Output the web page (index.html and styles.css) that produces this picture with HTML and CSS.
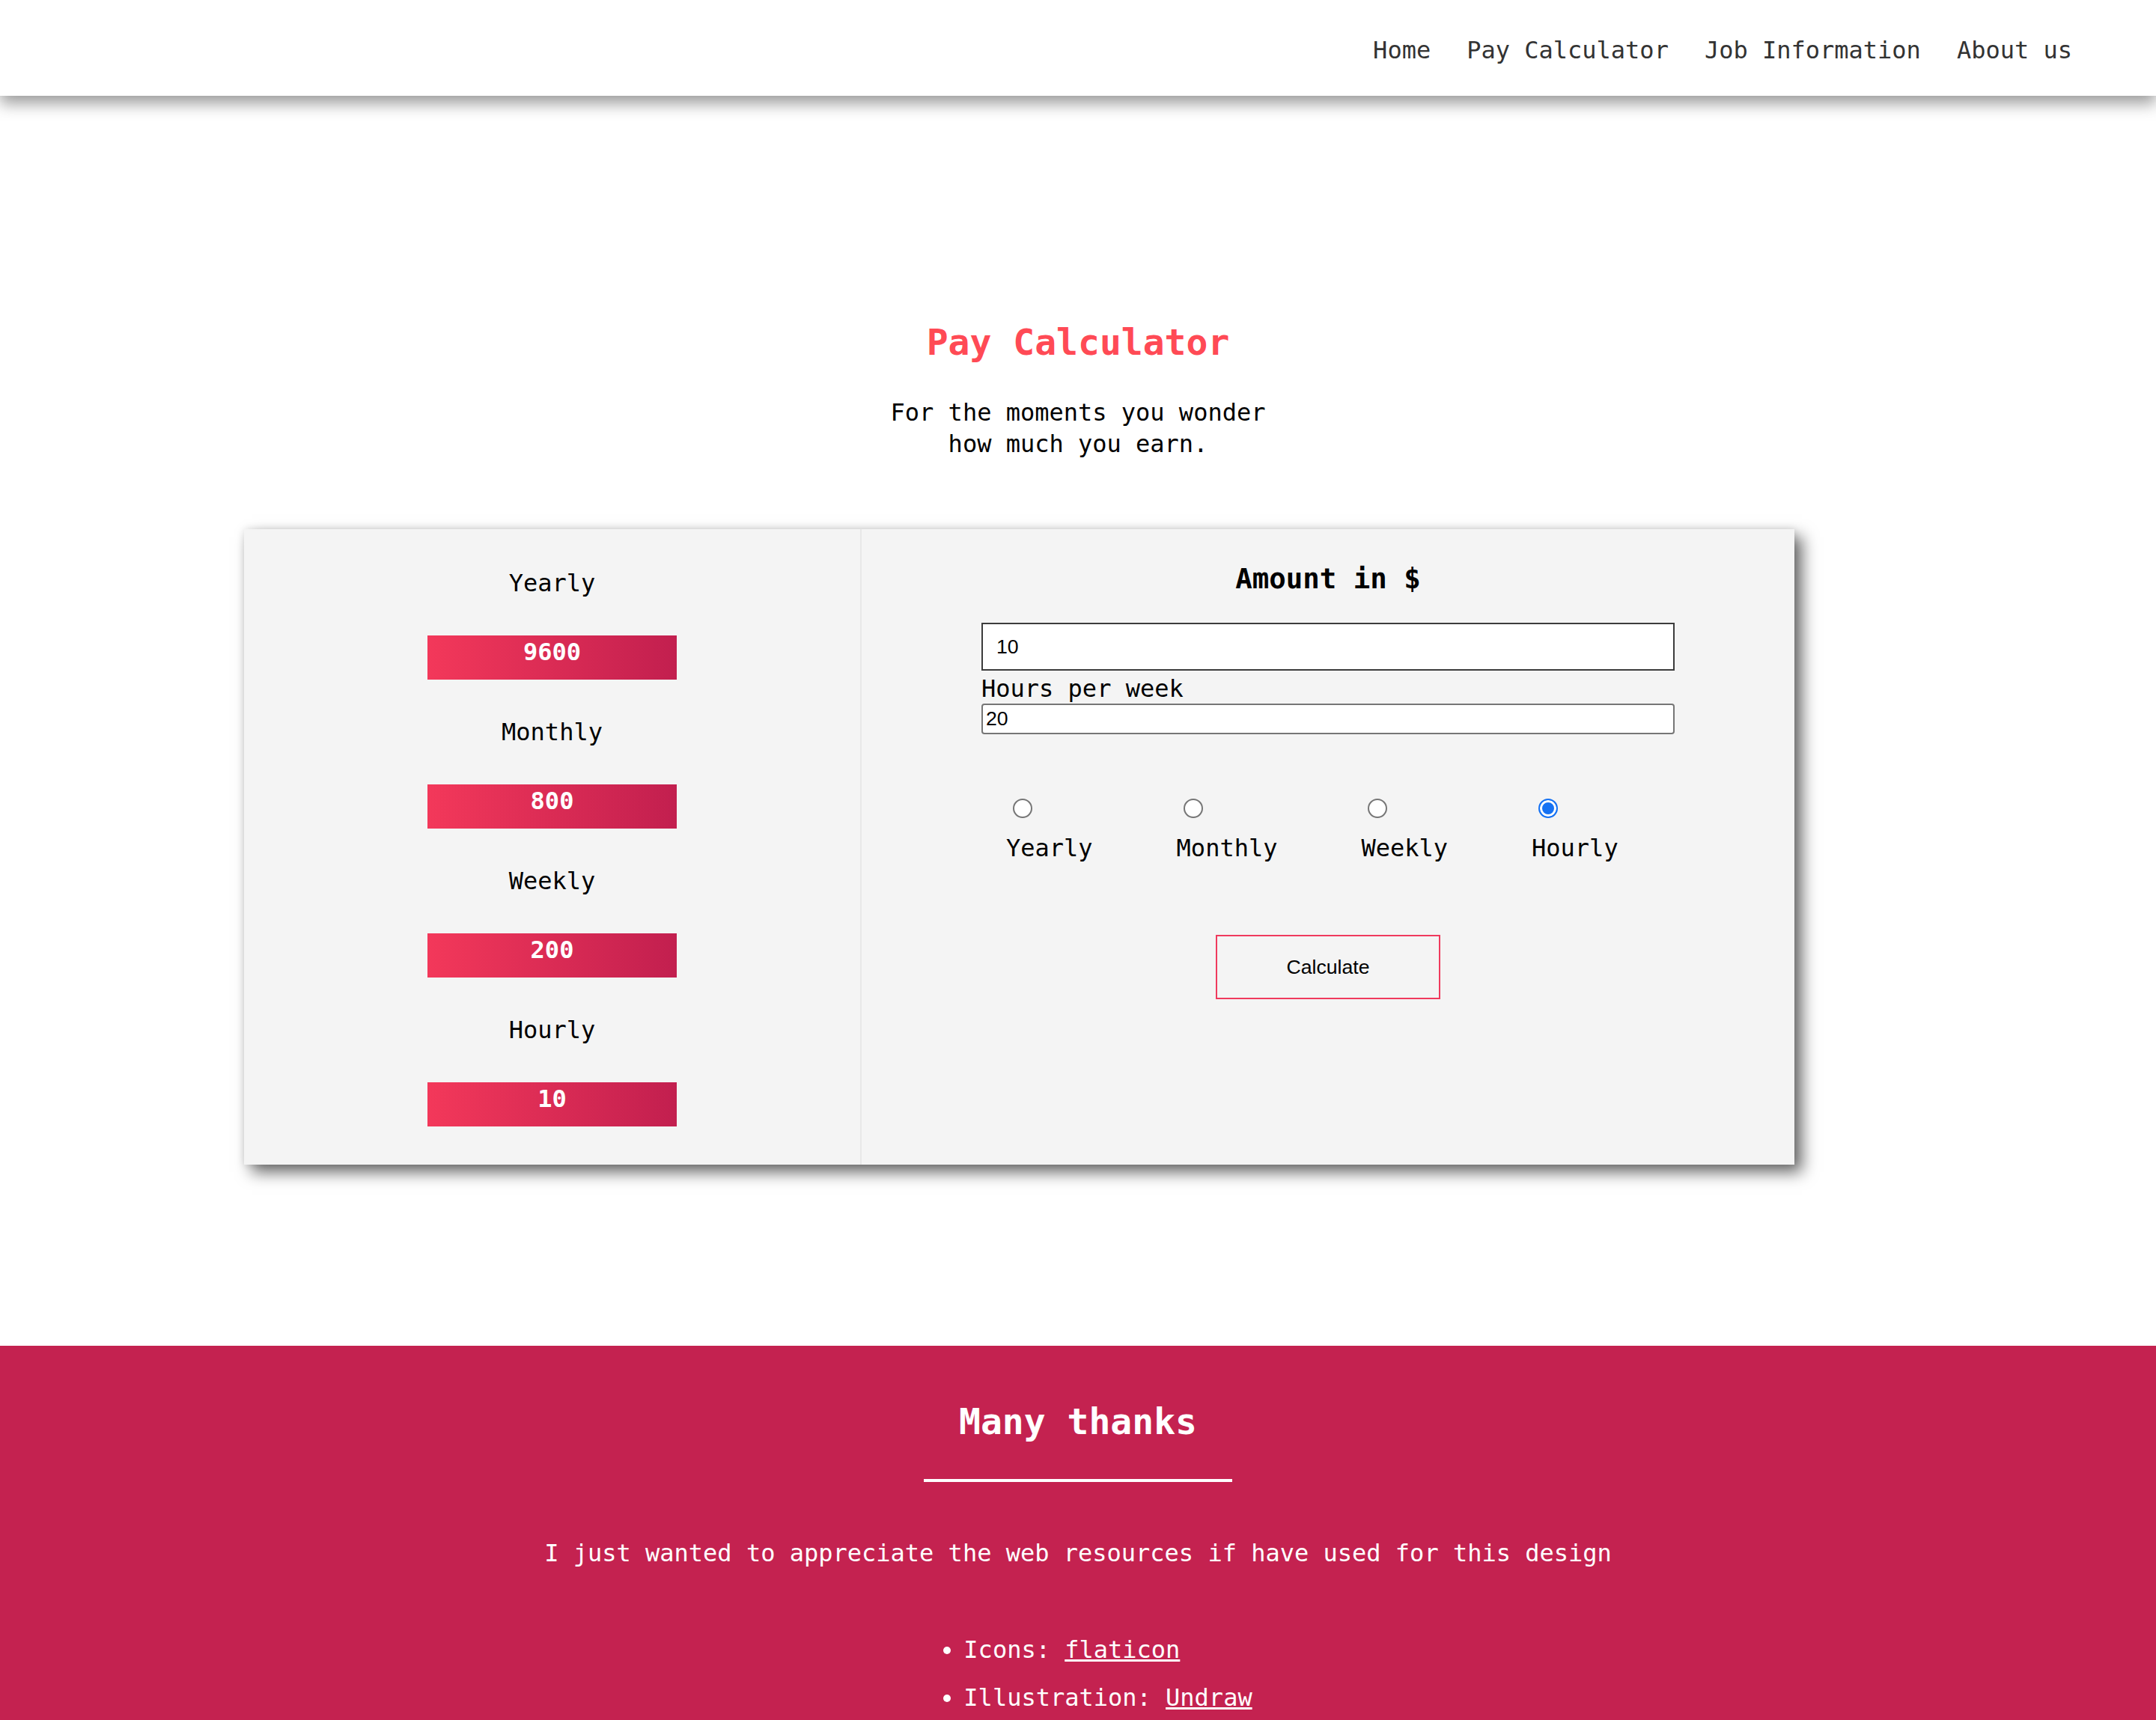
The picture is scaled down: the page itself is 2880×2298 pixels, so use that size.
FILE: index.html
```html
<!DOCTYPE html>
<html lang="en">
<head>
<meta charset="utf-8">
<title>Pay Calculator</title>
<link rel="stylesheet" href="styles.css">
</head>
<body>
<header class="navbar">
  <nav class="nav-links">
    <a href="#">Home</a>
    <a href="#">Pay Calculator</a>
    <a href="#">Job Information</a>
    <a href="#">About us</a>
  </nav>
</header>
<main class="main">
  <h1 class="title">Pay Calculator</h1>
  <p class="subtitle">For the moments you wonder<br>how much you earn.</p>
  <section class="card">
    <div class="results">
      <div class="result-label">Yearly</div>
      <div class="result-value">9600</div>
      <div class="result-label">Monthly</div>
      <div class="result-value">800</div>
      <div class="result-label">Weekly</div>
      <div class="result-value">200</div>
      <div class="result-label">Hourly</div>
      <div class="result-value">10</div>
    </div>
    <div class="form">
      <h3 class="form-title">Amount in $</h3>
      <div class="fields">
        <input class="amount" type="text" value="10">
        <label class="hours-label">Hours per week</label>
        <input class="hours" type="text" value="20">
      </div>
      <div class="periods">
        <label class="period"><input type="radio" name="period"><span>Yearly</span></label>
        <label class="period"><input type="radio" name="period"><span>Monthly</span></label>
        <label class="period"><input type="radio" name="period"><span>Weekly</span></label>
        <label class="period"><input type="radio" name="period" checked><span>Hourly</span></label>
      </div>
      <button class="calc" type="button">Calculate</button>
    </div>
  </section>
</main>
<footer class="footer">
  <h2 class="footer-title">Many thanks</h2>
  <div class="bar"></div>
  <p class="footer-text">I just wanted to appreciate the web resources if have used for this design</p>
  <ul class="credits">
    <li>Icons: <a href="#">flaticon</a></li>
    <li>Illustration: <a href="#">Undraw</a></li>
  </ul>
</footer>
</body>
</html>
```

FILE: styles.css
```css
* { box-sizing: border-box; }
html, body { margin: 0; padding: 0; }
body {
  font-family: "DejaVu Sans Mono", "Liberation Mono", monospace;
  font-size: 32px;
  color: #000;
  background: #fff;
}

.navbar {
  height: 128px;
  background: #fff;
  box-shadow: 0 10px 20px rgba(0,0,0,0.4);
  display: flex;
  justify-content: flex-end;
  align-items: center;
  padding: 6px 112px 0 0;
  position: relative;
  z-index: 1;
}
.nav-links { display: flex; gap: 48px; }
.nav-links a { color: #333; text-decoration: none; line-height: 40px; }

.main { padding-top: 297px; }
.title {
  margin: 0;
  text-align: center;
  font-size: 48px;
  line-height: 64px;
  color: #ff4a55;
  font-weight: 700;
}
.subtitle { margin: 41px 0 0; text-align: center; line-height: 42px; }

.card {
  margin: 93px 0 0 326px;
  width: 2071px;
  height: 849px;
  display: flex;
  background: #f4f4f4;
  box-shadow: 10px 10px 20px rgba(0,0,0,0.6), 0 0 10px rgba(0,0,0,0.1);
}
.results {
  width: 825px;
  border-right: 2px solid #e8e8e8;
  padding-top: 52px;
  display: flex;
  flex-direction: column;
  align-items: center;
}
.result-label { line-height: 40px; }
.result-value {
  margin: 50px 0;
  width: 333px;
  height: 59px;
  line-height: 44px;
  text-align: center;
  color: #fff;
  font-weight: 700;
  background: linear-gradient(to right, #f3385a, #c21f4f);
}

.form { flex: 1; padding-top: 44px; display: flex; flex-direction: column; }
.form-title { margin: 0; text-align: center; font-size: 37.4px; line-height: 44px; font-weight: 700; }
.fields { padding: 0 160px; margin-top: 37px; }
.amount {
  display: block;
  width: 100%;
  height: 64px;
  border: 2px solid #3c3c3c;
  padding: 0 18px;
  font: 26.67px "Liberation Sans", Arial, sans-serif;
  color: #000;
  background: #fff;
  outline: none;
}
.hours-label { display: block; margin-top: 4px; line-height: 40px; }
.hours {
  display: block;
  width: 100%;
  height: 41px;
  border: 2px solid #767676;
  border-radius: 4px;
  padding: 0 4px;
  font: 26.67px "Liberation Sans", Arial, sans-serif;
  color: #000;
  background: #fff;
  outline: none;
}
.periods { display: flex; gap: 112px; margin-top: 86px; padding-left: 193px; }
.period { display: flex; flex-direction: column; align-items: flex-start; }
.period input {
  -webkit-appearance: none;
  appearance: none;
  width: 26px;
  height: 26px;
  margin: 0 0 20px 9px;
  border: 2px solid #767676;
  border-radius: 50%;
  background: #fff;
}
.period input:checked {
  border-color: #1672f3;
  background: #1672f3;
  box-shadow: inset 0 0 0 3px #fff;
}
.period span { line-height: 40px; }
.calc {
  margin: 96px auto 0;
  width: 300px;
  height: 86px;
  border: 2px solid #ef3a5d;
  background: transparent;
  font: 26.67px "Liberation Sans", Arial, sans-serif;
  color: #000;
  padding: 0;
}

.footer {
  margin-top: 242px;
  background: #c42250;
  color: #fff;
  text-align: center;
  padding: 69px 0 120px;
}
.footer-title { margin: 0; font-size: 48px; line-height: 64px; font-weight: 700; }
.bar { width: 412px; height: 4px; background: #fff; margin: 45px auto 0; }
.footer-text { margin: 75px 0 0; line-height: 40px; }
.credits { display: inline-block; text-align: left; margin: 77px 0 0; padding-left: 80px; }
.credits li { line-height: 64px; }
.credits a { color: #fff; text-decoration: underline; }
```
